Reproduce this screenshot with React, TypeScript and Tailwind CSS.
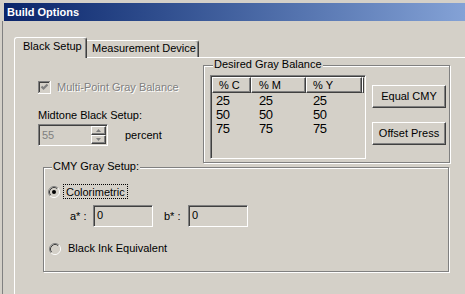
import React from "react";

const sunken =
  "border border-t-[#808080] border-l-[#808080] border-r-white border-b-white shadow-[inset_1px_1px_0_#404040,inset_-1px_-1px_0_#d4d0c8]";
const raised =
  "border border-t-white border-l-white border-r-[#404040] border-b-[#404040] shadow-[inset_-1px_-1px_0_#808080]";
const etched =
  "border border-[#808080] shadow-[inset_1px_1px_0_#fff,1px_1px_0_#fff]";

function Radio({ checked }: { checked?: boolean }) {
  return (
    <svg width="12" height="12" viewBox="0 0 12 12" className="shrink-0">
      <circle cx="6" cy="6" r="4" fill="#d4d0c8" />
      <path d="M2.11 9.89 A5.5 5.5 0 0 1 9.89 2.11" fill="none" stroke="#808080" strokeWidth="1" />
      <path d="M9.89 2.11 A5.5 5.5 0 0 1 2.11 9.89" fill="none" stroke="#ffffff" strokeWidth="1" />
      <path d="M2.82 9.18 A4.5 4.5 0 0 1 9.18 2.82" fill="none" stroke="#404040" strokeWidth="1" />
      <path d="M9.18 2.82 A4.5 4.5 0 0 1 2.82 9.18" fill="none" stroke="#d4d0c8" strokeWidth="1" />
      {checked && <circle cx="6" cy="6" r="2" fill="#000" />}
    </svg>
  );
}

function CheckBox() {
  return (
    <svg width="13" height="13" viewBox="0 0 13 13" className="shrink-0">
      <rect x="0" y="0" width="13" height="13" fill="#fff" />
      <rect x="0" y="0" width="12" height="12" fill="#808080" />
      <rect x="1" y="1" width="11" height="11" fill="#d4d0c8" />
      <rect x="1" y="1" width="10" height="10" fill="#404040" />
      <rect x="2" y="2" width="9" height="9" fill="#d4d0c8" />
      <polyline points="3.5,5.5 5.5,7.5 9.5,3.5" fill="none" stroke="#808080" strokeWidth="2.2" />
    </svg>
  );
}

export default function App() {
  return (
    <div className="w-[465px] h-[294px] overflow-hidden bg-[#d4d0c8] font-['Liberation_Sans',Arial,sans-serif] text-[11px] leading-[13px] text-black">
      {/* title bar */}
      <div className="pt-[3px] pl-[4px]">
        <div className="h-[18px] flex items-center pl-[3px] bg-gradient-to-r from-[#0a246a] to-[#84a2d6] text-white font-bold text-[11px]">
          Build Options
        </div>
      </div>

      <div className="flex h-[273px]">
        <div className="w-[2px]" />
        <div className="w-[1px] bg-[#808080]" />
        <div className="flex-1 flex flex-col pl-[11px] pt-[16px]">
          {/* tabs */}
          <div className="flex items-end h-[20px]">
            <div className="relative z-10 h-[21px] mb-[-1px] w-[73px] bg-[#d4d0c8] border-l border-t border-r border-l-white border-t-white border-r-[#404040] rounded-t-[3px] shadow-[inset_-1px_0_0_#808080] pl-[8px] pt-[2px]">
              Black Setup
            </div>
            <div className="h-[17px] w-[112px] border-t border-r border-t-white border-r-[#404040] rounded-tr-[3px] shadow-[inset_-1px_0_0_#808080] pl-[5px] pt-[1px]">
              Measurement Device
            </div>
          </div>

          {/* panel */}
          <div className="flex-1 border-l border-t border-white pt-[7px]">
            <div className="flex items-start pl-[23px]">
              {/* left column */}
              <div className="w-[165px] pt-[16px]">
                <div className="flex items-center h-[13px]">
                  <CheckBox />
                  <span className="ml-[6px] text-[#808080] [text-shadow:1px_1px_0_#fff]">
                    Multi-Point Gray Balance
                  </span>
                </div>
                <div className="mt-[15px]">Midtone Black Setup:</div>
                <div className="flex items-center mt-[2px]">
                  <div className={`w-[70px] h-[22px] flex items-stretch ${sunken} p-[1px]`}>
                    <div className="flex-1 pl-[2px] pt-[3px] text-[#808080]">55</div>
                    <div className="w-[15px] flex flex-col">
                      <div className={`flex-1 ${raised} flex items-center justify-center`}>
                        <svg width="5" height="3" viewBox="0 0 5 3">
                          <path d="M2.5 0 L5 3 L0 3 Z" fill="#808080" />
                        </svg>
                      </div>
                      <div className={`flex-1 ${raised} flex items-center justify-center`}>
                        <svg width="5" height="3" viewBox="0 0 5 3">
                          <path d="M0 0 L5 0 L2.5 3 Z" fill="#808080" />
                        </svg>
                      </div>
                    </div>
                  </div>
                  <span className="ml-[17px]">percent</span>
                </div>
              </div>

              {/* Desired Gray Balance */}
              <div className={`relative w-[247px] h-[98px] ${etched} pl-[6px] pt-[9px] flex items-start`}>
                <span className="absolute left-[9px] top-[-8px] px-[1px] bg-[#d4d0c8]">
                  Desired Gray Balance
                </span>
                <div className={`w-[156px] h-[84px] ${sunken} p-[1px] flex flex-col`}>
                  <div className="flex h-[16px]">
                    <div className={`w-[39px] ${raised} pl-[6px] pt-[1px]`}>% C</div>
                    <div className={`w-[55px] ${raised} pl-[7px] pt-[1px]`}>% M</div>
                    <div className={`w-[56px] ${raised} pl-[6px] pt-[1px]`}>% Y</div>
                    <div className={`flex-1 ${raised}`} />
                  </div>
                  {["25", "50", "75"].map((v) => (
                    <div key={v} className="flex h-[14px] items-center text-[13px] tracking-[-0.5px] first:mt-[1px]">
                      <div className="w-[39px] pl-[4px]">{v}</div>
                      <div className="w-[55px] pl-[8px]">{v}</div>
                      <div className="w-[56px] pl-[7px]">{v}</div>
                    </div>
                  ))}
                </div>
                <div className="ml-[6px] mt-[10px] flex flex-col gap-[14px]">
                  <div className={`w-[74px] h-[23px] ${raised} flex items-center justify-center`}>
                    Equal CMY
                  </div>
                  <div className={`w-[74px] h-[23px] ${raised} flex items-center justify-center`}>
                    Offset Press
                  </div>
                </div>
              </div>
            </div>

            {/* CMY Gray Setup */}
            <div className={`relative ml-[28px] mt-[4px] w-[406px] h-[105px] ${etched} pl-[4px] pt-[16px]`}>
              <span className="absolute left-[8px] top-[-8px] px-[1px] bg-[#d4d0c8]">
                CMY Gray Setup:
              </span>
              <div className="flex items-center h-[15px]">
                <Radio checked />
                <span className="ml-[3px] h-[15px] px-[2px] pt-[1px] border border-dotted border-black">
                  Colorimetric
                </span>
              </div>
              <div className="flex items-center mt-[6px] ml-[22px]">
                <span className="w-[23px]">a* :</span>
                <div className={`w-[60px] h-[22px] ${sunken} pl-[3px] pt-[3px]`}>0</div>
                <span className="ml-[11px] w-[24px]">b* :</span>
                <div className={`w-[60px] h-[22px] ${sunken} pl-[3px] pt-[3px]`}>0</div>
              </div>
              <div className="flex items-center mt-[15px] h-[13px]">
                <div className="ml-[1px]">
                  <Radio />
                </div>
                <span className="ml-[7px]">Black Ink Equivalent</span>
              </div>
            </div>
          </div>
        </div>
      </div>
    </div>
  );
}
